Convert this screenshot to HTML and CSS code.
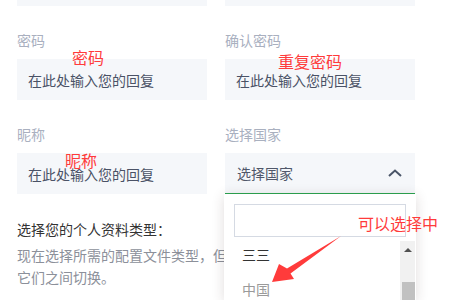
FILE: index.html
```html
<!DOCTYPE html>
<html lang="zh-CN">
<head>
  <meta charset="UTF-8" />
  <meta name="viewport" content="width=device-width, initial-scale=1.0" />
  <title>注册</title>
  <link rel="stylesheet" href="styles.css">
</head>
<body>
  <div class="form">
    <div class="grid">
      <div class="field">
        <div class="input"></div>
      </div>
      <div class="field">
        <div class="input"></div>
      </div>
      <div class="field">
        <label class="field-label">密码</label>
        <div class="input">在此处输入您的回复</div>
      </div>
      <div class="field">
        <label class="field-label">确认密码</label>
        <div class="input">在此处输入您的回复</div>
      </div>
      <div class="field">
        <label class="field-label">昵称</label>
        <div class="input">在此处输入您的回复</div>
      </div>
      <div class="field select-field">
        <label class="field-label">选择国家</label>
        <div class="select">
          <span>选择国家</span>
          <svg class="chevron" viewBox="0 0 14 8" width="14" height="8"><polyline points="1,7 7,1.5 13,7" fill="none" stroke="currentColor" stroke-width="2"/></svg>
        </div>
        <div class="dropdown">
          <div class="search"></div>
          <div class="list">
            <div class="options">
              <div class="option">三三</div>
              <div class="option muted">中国</div>
            </div>
            <div class="scrollbar">
              <span class="scroll-up"></span>
              <span class="scroll-thumb"></span>
            </div>
          </div>
        </div>
      </div>
    </div>
    <div class="profile">
      <h3>选择您的个人资料类型：</h3>
      <p>现在选择所需的配置文件类型，但您以后可以随时在<br>它们之间切换。</p>
    </div>
  </div>

  <!-- 标注 -->
  <span class="note note-pwd">密码</span>
  <span class="note note-repeat">重复密码</span>
  <span class="note note-nick">昵称</span>
  <span class="note note-select">可以选择中</span>
  <svg class="note-arrow" viewBox="0 0 470 300" width="470" height="300">
    <polygon points="341,236 290.5,273.5 294,279 272,282 279,264 287,268.5" fill="#ff3b3b"/>
  </svg>
</body>
</html>
```

FILE: styles.css
```css
* { box-sizing: border-box; margin: 0; padding: 0; }
html, body { overflow: hidden; }
body {
  font-family: "Noto Sans CJK SC", "Noto Sans", sans-serif;
  background: #fff;
  width: 470px;
  height: 300px;
  position: relative;
}
.form {
  margin-top: -35px;
  padding-left: 17px;
  width: 415px;
}
.grid {
  display: grid;
  grid-template-columns: 190px 190px;
  column-gap: 18px;
  row-gap: 24px;
}
.field { display: flex; flex-direction: column; gap: 9px; }
.field-label {
  font-size: 14px;
  line-height: 20px;
  color: #a9b0bf;
}
.input, .select {
  height: 41px;
  background: #f5f7fa;
  padding: 0 11px;
  font-size: 14px;
  color: #4a5266;
  display: flex;
  align-items: center;
}
.select-field { position: relative; }
.select {
  justify-content: space-between;
  padding: 0 13px 0 12px;
  border-bottom: 1px solid #2aa44f;
  color: #50576a;
}
.chevron { color: #4a5568; }
.dropdown {
  position: absolute;
  top: 70px;
  left: -1px;
  width: 192px;
  height: 106px;
  background: #fff;
  box-shadow: 0 2px 12px rgba(60, 40, 40, 0.16);
  padding-top: 10px;
  z-index: 5;
}
.search {
  height: 33px;
  margin: 0 10px;
  border: 1px solid #d5dae3;
}
.list { display: flex; }
.options { flex: 1; }
.option {
  height: 35px;
  line-height: 35px;
  padding-left: 18px;
  font-size: 14px;
  color: #333;
}
.option.muted { color: #9a9a9a; }
.scrollbar {
  width: 15px;
  margin: 4px 1px 0 0;
  height: 59px;
  background: #f1f1f1;
  display: flex;
  flex-direction: column;
  align-items: center;
}
.scroll-up {
  margin-top: 7px;
  width: 0;
  height: 0;
  border-left: 4px solid transparent;
  border-right: 4px solid transparent;
  border-bottom: 4px solid #505050;
}
.scroll-thumb {
  margin-top: 30px;
  margin-left: 2px;
  width: 13px;
  flex: 1;
  background: #c1c1c1;
}
.profile { margin-top: 25px; }
.profile h3 {
  font-size: 14px;
  font-weight: normal;
  line-height: 20px;
  color: #333;
}
.profile p {
  margin-top: 5px;
  font-size: 14px;
  line-height: 22px;
  color: #8c909a;
  white-space: nowrap;
}
.note {
  position: absolute;
  font-size: 16px;
  line-height: 16px;
  color: #ff3b3b;
  z-index: 10;
}
.note-pwd { left: 72px; top: 49px; }
.note-repeat { left: 278px; top: 53px; }
.note-nick { left: 65px; top: 152px; }
.note-select { left: 358px; top: 215px; }
.note-arrow {
  position: absolute;
  left: 0;
  top: 0;
  z-index: 10;
  pointer-events: none;
}
```
